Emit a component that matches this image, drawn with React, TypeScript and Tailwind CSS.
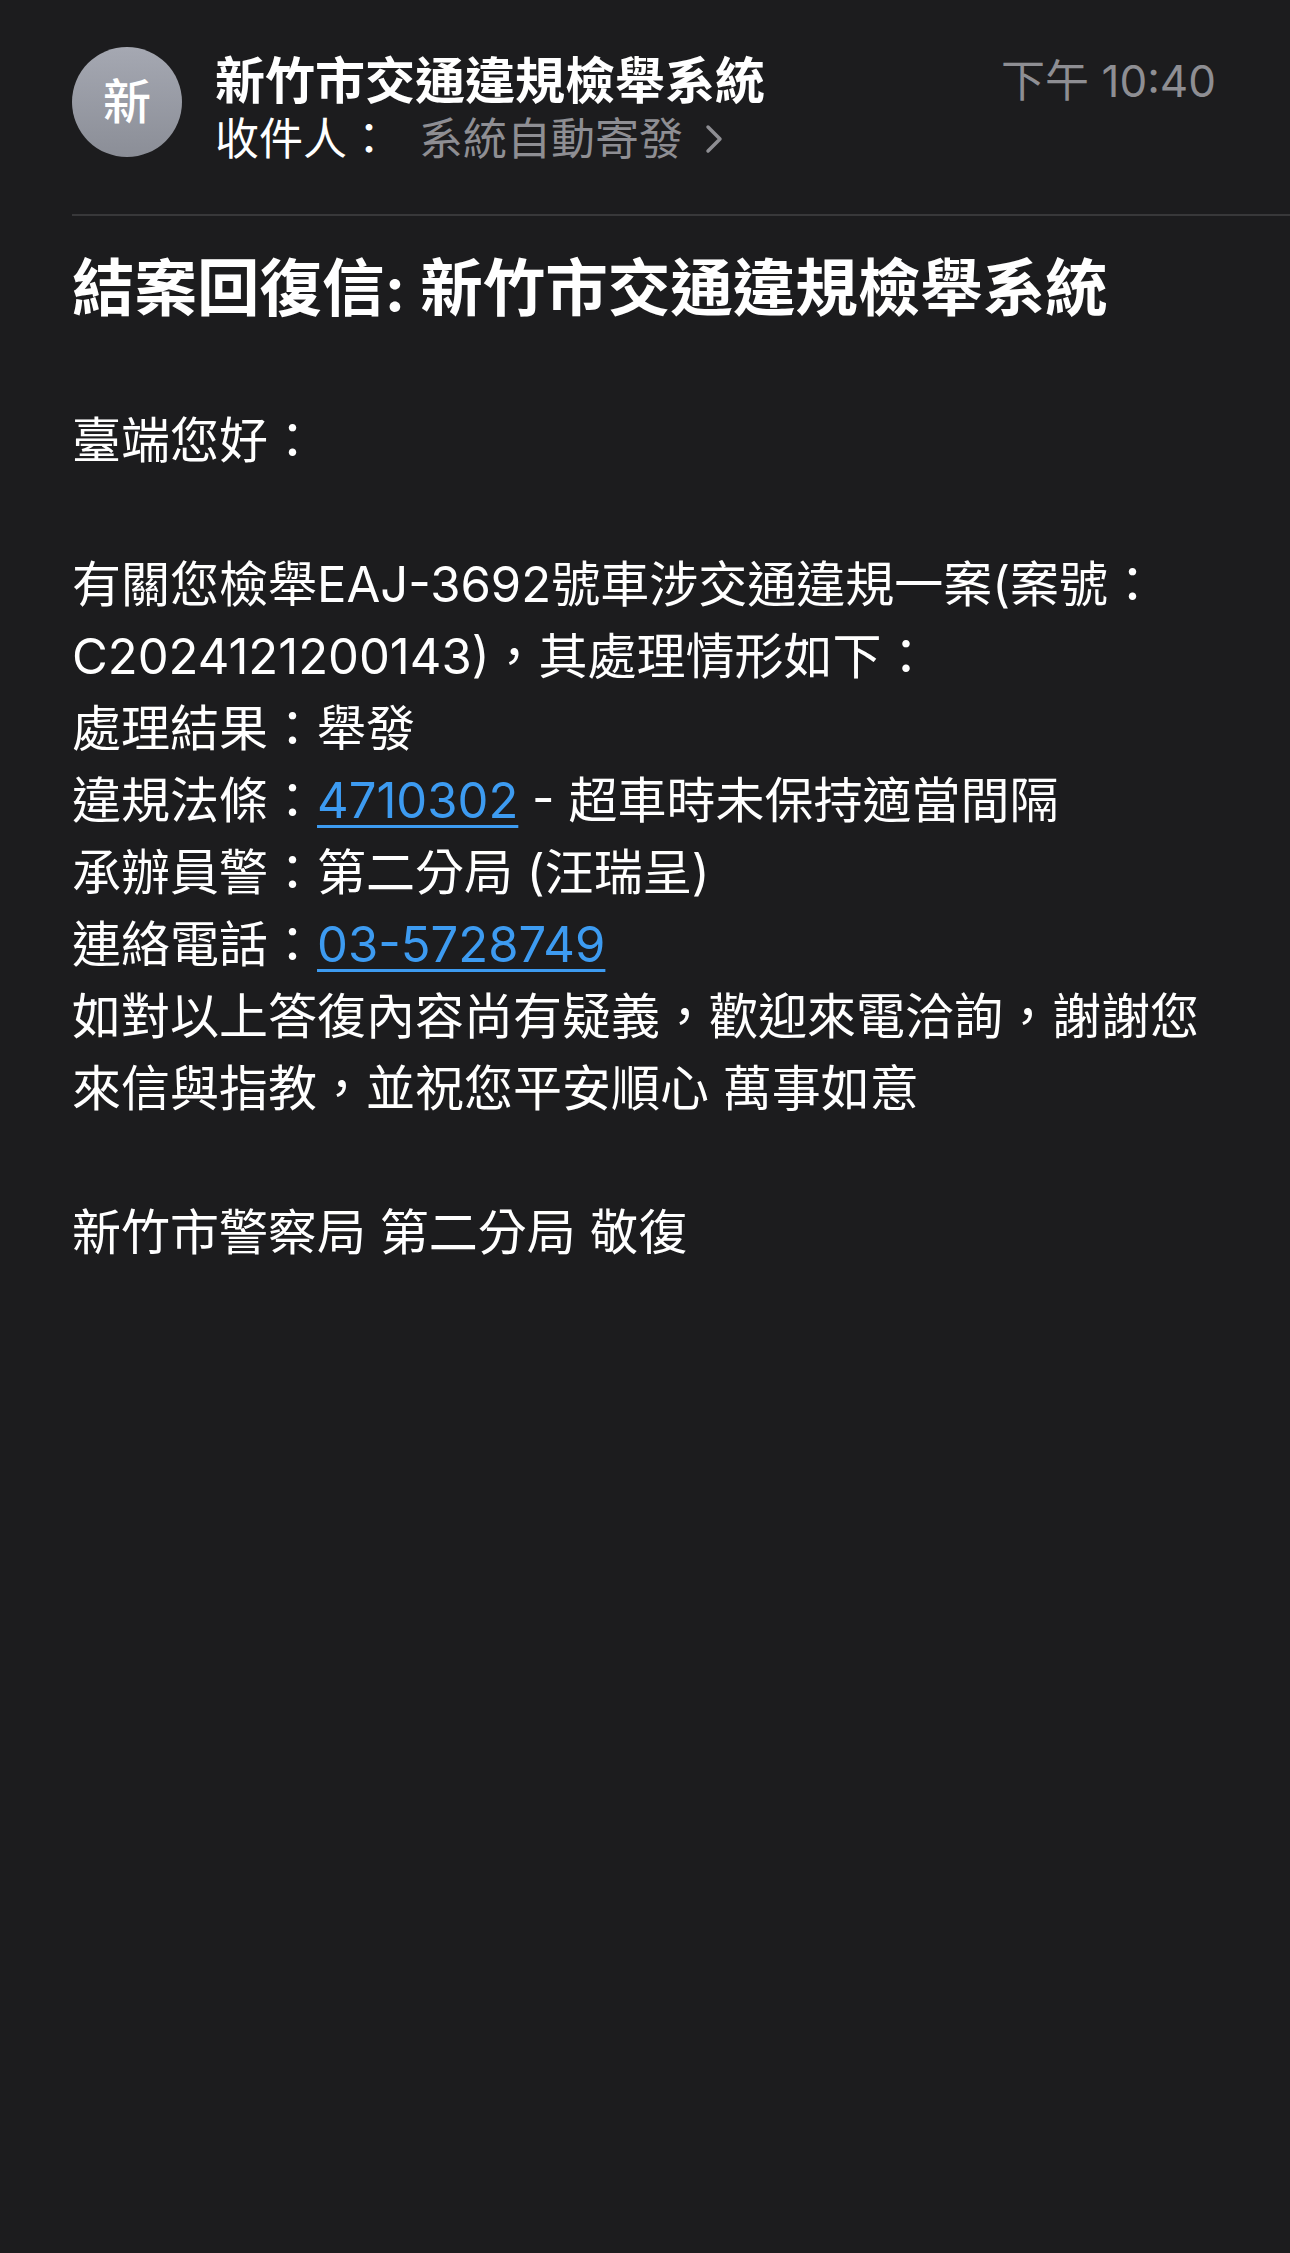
import React from "react";

const font = { fontFamily: '"Inter", "Noto Sans CJK TC", "Noto Sans", sans-serif' };

function Line({ children }: { children?: React.ReactNode }) {
  return <div className="h-[72px] leading-[72px] whitespace-nowrap">{children}</div>;
}

function Link({ children }: { children: React.ReactNode }) {
  return (
    <span className="text-[#3d9bf1] underline decoration-[3px] underline-offset-[7px]">{children}</span>
  );
}

export default function App() {
  return (
    <div className="w-[1290px] min-h-[2253px] bg-[#1c1c1e] text-white" style={font}>
      <div className="flex pl-[72px] pr-[74px] pt-[47px]">
        <div className="w-[110px] h-[110px] rounded-full bg-gradient-to-b from-[#a5a8b2] to-[#8b8e97] flex items-center justify-center shrink-0">
          <span className="text-[48px] leading-none font-medium text-white">新</span>
        </div>
        <div className="ml-[33px] flex-1 flex flex-col">
          <div className="flex items-start justify-between">
            <div className="text-[50px] leading-[60px] font-semibold mt-[4px]">新竹市交通違規檢舉系統</div>
            <div className="text-[44px] leading-[60px] text-[#8e8e93] mt-[4px]">下午 10:40</div>
          </div>
          <div className="flex items-center mt-[1px] h-[54px] text-[44px] leading-[54px]">
            <span className="text-white">收件人：</span>
            <span className="ml-[28px] text-[#8e8e93]">系統自動寄發</span>
            <svg className="ml-[22px]" width="18" height="30" viewBox="0 0 18 30" fill="none">
              <path d="M3 3 L15 15 L3 27" stroke="#8e8e93" strokeWidth="3.5" strokeLinecap="round" strokeLinejoin="round" />
            </svg>
          </div>
        </div>
      </div>
      <div className="ml-[72px] mt-[48px] h-[2px] bg-[#38383a]" />
      <div className="px-[72px]">
        <div className="mt-[34px] text-[62.5px] leading-[76px] font-bold whitespace-nowrap">結案回復信: 新竹市交通違規檢舉系統</div>
        <div className="mt-[79px] text-[49px]">
          <Line>臺端您好：</Line>
          <Line />
          <Line>有關您檢舉EAJ-3692號車涉交通違規一案(案號：</Line>
          <Line>C2024121200143)，其處理情形如下：</Line>
          <Line>處理結果：舉發</Line>
          <Line>
            違規法條：<Link>4710302</Link> - 超車時未保持適當間隔
          </Line>
          <Line>承辦員警：第二分局 (汪瑞呈)</Line>
          <Line>
            連絡電話：<Link>03-5728749</Link>
          </Line>
          <Line>如對以上答復內容尚有疑義，歡迎來電洽詢，謝謝您</Line>
          <Line>來信與指教，並祝您平安順心 萬事如意</Line>
          <Line />
          <Line>新竹市警察局 第二分局 敬復</Line>
        </div>
      </div>
    </div>
  );
}
